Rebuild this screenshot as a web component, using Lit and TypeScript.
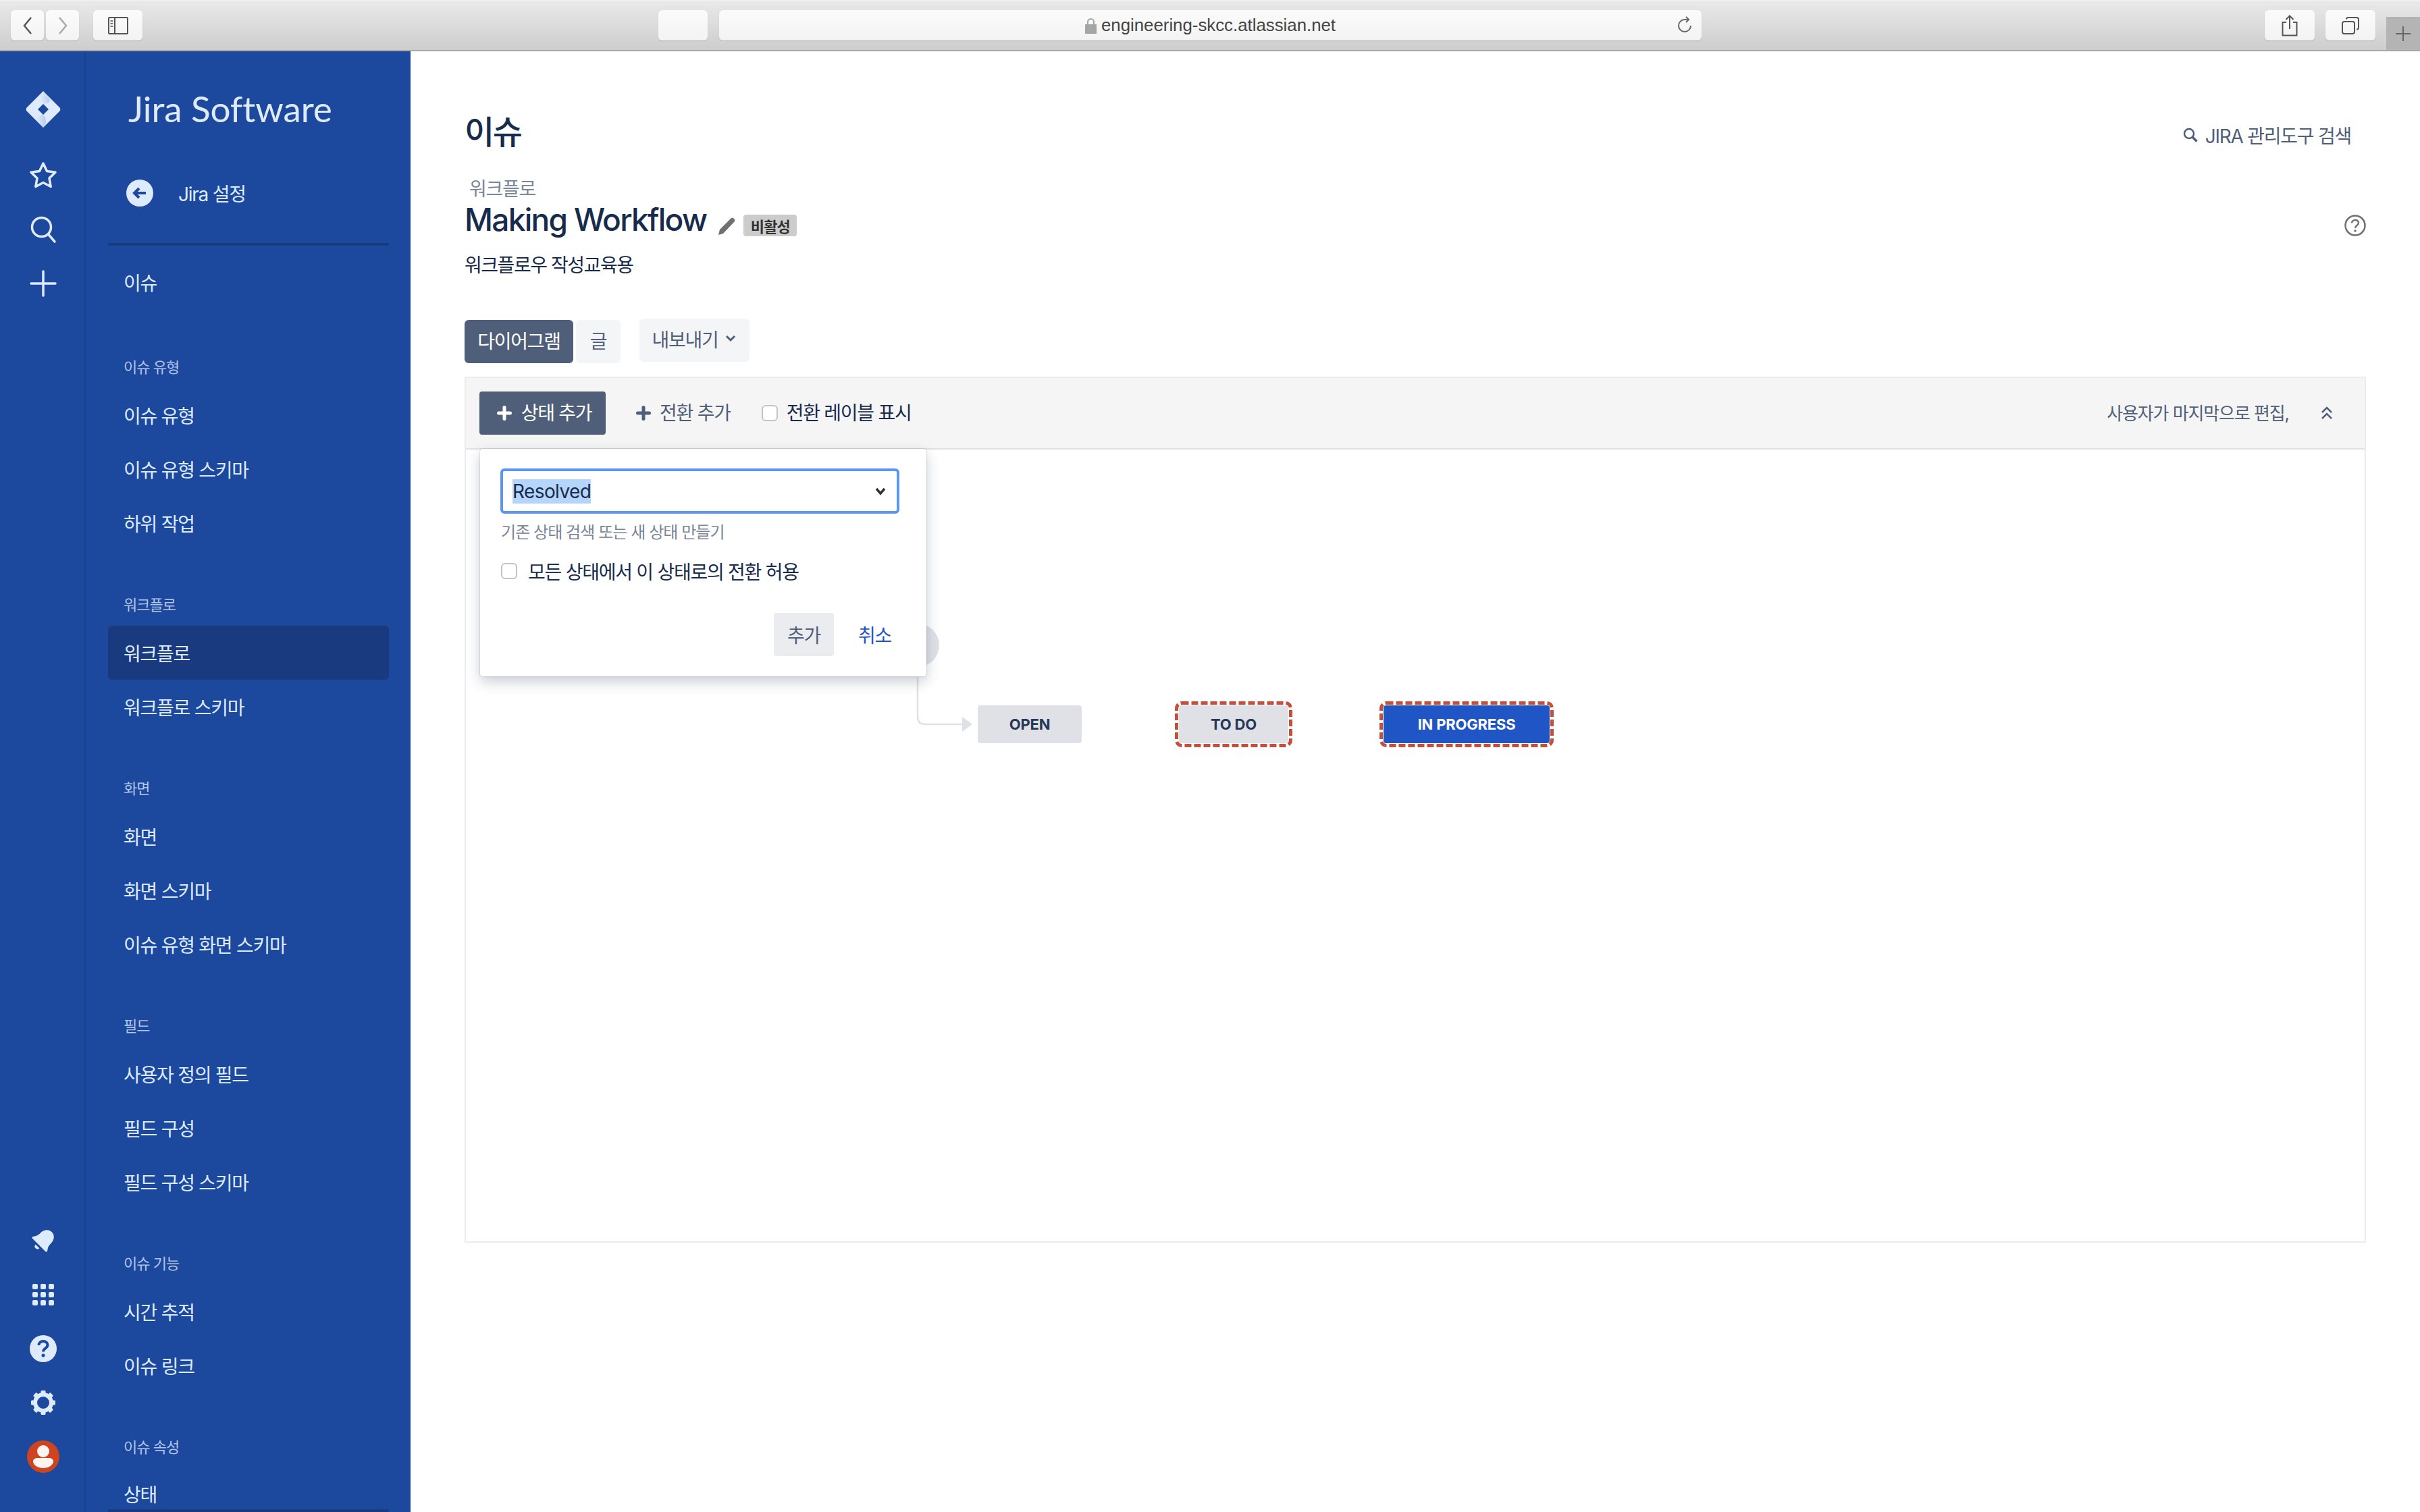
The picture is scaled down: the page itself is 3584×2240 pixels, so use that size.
import { LitElement, html, css, svg } from "lit";
import { customElement } from "lit/decorators.js";

const sections: { heading?: string; items: string[] }[] = [
  { heading: "이슈 유형", items: ["이슈 유형", "이슈 유형 스키마", "하위 작업"] },
  { heading: "워크플로", items: ["워크플로", "워크플로 스키마"] },
  { heading: "화면", items: ["화면", "화면 스키마", "이슈 유형 화면 스키마"] },
  { heading: "필드", items: ["사용자 정의 필드", "필드 구성", "필드 구성 스키마"] },
  { heading: "이슈 기능", items: ["시간 추적", "이슈 링크"] },
  { heading: "이슈 속성", items: ["상태"] },
];

const ICON = "#deebff";

@customElement("app-root")
export class AppRoot extends LitElement {
  static styles = css`
    :host {
      display: flex;
      flex-direction: column;
      width: 3584px;
      height: 2240px;
      overflow: hidden;
      background: #fff;
      font-family: Inter, "Noto Sans CJK KR", sans-serif;
      font-size: 28px;
      letter-spacing: -1.25px;
      color: #172b4d;
    }
    * { box-sizing: border-box; }
    svg { display: block; }

    /* Browser chrome */
    .chrome {
      position: relative;
      flex: none;
      height: 76px;
      display: flex;
      align-items: flex-start;
      padding: 13px 16px 0;
      background: linear-gradient(#e9e9e9, #cdcdcd);
      border-bottom: 2px solid #a9a9a9;
      border-top: 2px solid #efefef;
    }
    .cb {
      flex: none;
      height: 45px;
      border-radius: 6px;
      background: linear-gradient(#fbfbfb, #f3f3f3);
      box-shadow: 0 1px 1px #a9a9a9;
      display: flex;
      align-items: center;
      justify-content: center;
    }
    .cb.nav { width: 49px; margin-right: 3px; }
    .cb.side { width: 73px; margin-left: 18px; }
    .cb.blank { width: 73px; margin-left: 764px; }
    .cb.url {
      width: 1455px;
      margin-left: 17px;
      position: relative;
      gap: 7px;
      font-family: "Liberation Sans", sans-serif;
      font-size: 25.8px;
      letter-spacing: 0;
      color: #444;
    }
    .cb.url .reload { position: absolute; right: 12px; top: 9px; }
    .cb.share { width: 74px; margin-left: 834px; }
    .cb.tabs { width: 74px; margin-left: 16px; }
    .newtab {
      flex: none;
      width: 50px;
      height: 49px;
      margin: 10px -16px 0 16px;
      background: #b4b4b4;
      display: flex;
      align-items: center;
      justify-content: center;
    }

    .body { flex: 1; display: flex; min-height: 0; }

    /* Rail */
    .rail {
      flex: none;
      width: 127px;
      background: #1c489e;
      border-right: 2px solid #1a4290;
      display: flex;
      flex-direction: column;
      align-items: center;
      padding: 59px 0 58px 2px;
    }
    .rail .logo { margin-bottom: 49px; }
    .rail .top { display: flex; flex-direction: column; align-items: center; gap: 36px; }
    .rail .bottom { margin-top: auto; display: flex; flex-direction: column; align-items: center; gap: 36px; }
    .rail .avatar { margin-top: -2px; }

    /* Sidebar */
    .side-nav {
      flex: none;
      width: 481px;
      background: #1c489e;
      color: #deebff;
      padding: 0 32px 0 33px;
      overflow: hidden;
    }
    .brand {
      font-family: Lato, sans-serif;
      font-weight: 400;
      font-size: 53px;
      letter-spacing: -0.1px;
      line-height: 60px;
      padding: 55px 0 0 30px;
      height: 117px;
      color: #deebff;
    }
    .back {
      height: 80px;
      margin-top: 53px;
      display: flex;
      align-items: center;
      padding-left: 27px;
      gap: 37px;
      color: #deebff;
    }
    .rule { height: 4px; border-radius: 2px; background: #1a3a7f; }
    .rule.upper { margin-top: 34px; }
    .item {
      height: 80px;
      display: flex;
      align-items: center;
      padding-left: 23px;
      border-radius: 6px;
      white-space: nowrap;
    }
    .item.first { margin-top: 14px; }
    .item.sel { background: #1a3a7f; }
    .item.last { height: 61px; align-items: flex-start; padding-top: 23px; line-height: 34px; }
    .heading {
      height: 66px;
      margin-top: 46px;
      display: flex;
      align-items: center;
      padding-left: 23px;
      font-size: 22px;
      letter-spacing: -1px;
      color: #b3c5e8;
    }
    .heading.first { margin-top: 51px; }

    /* Main */
    .main { position: relative; flex: 1; min-width: 0; padding: 0 80px 0 80px; }
    .top-row { display: flex; justify-content: space-between; align-items: center; height: 166px; padding-top: 74px; }
    h1 { margin: 0; font-size: 48px; line-height: 56px; font-weight: 500; letter-spacing: -2.4px; color: #172b4d; }
    .admin { display: flex; align-items: center; gap: 11px; color: #505f79; padding-right: 22px; margin-top: 8px; }
    .crumb { color: #7a869a; padding-left: 7px; line-height: 34px; margin-top: 21px; }
    .title-row { display: flex; align-items: center; height: 56px; position: relative; }
    .title { font-size: 46px; font-weight: 500; line-height: 56px; letter-spacing: -1.7px; color: #172b4d; }
    .pencil { margin-left: 17px; margin-top: 20px; }
    .badge {
      margin-left: 12px;
      margin-top: 18px;
      height: 32px;
      width: 79px;
      border-radius: 4px;
      background: #ccc;
      color: #333;
      font-size: 22px;
      font-weight: 700;
      letter-spacing: -0.8px;
      display: flex;
      align-items: center;
      justify-content: center;
    }
    .help { margin-left: auto; margin-right: 0; margin-top: 18px; }
    .desc { margin-top: 23px; line-height: 34px; letter-spacing: -1.45px; }

    .tabs-row { display: flex; align-items: flex-start; margin-top: 64px; height: 64px; }
    .tab {
      height: 64px;
      display: flex;
      align-items: center;
      justify-content: center;
      border-radius: 6px;
      background: #f4f5f7;
      color: #505f79;
      padding-bottom: 5px;
    }
    .tab.on { width: 161px; background: #505f79; color: #fff; }
    .tab.text { width: 66px; margin-left: 4px; }
    .tab.export { width: 163px; margin-left: 28px; margin-top: -2px; gap: 10px; padding-right: 2px; }

    .panel {
      margin-top: 20px;
      height: 1283px;
      border: 2px solid #ebecf0;
      position: relative;
    }
    .toolbar {
      height: 106px;
      background: #f5f5f6;
      border-bottom: 2px solid #dfe1e6;
      display: flex;
      align-items: center;
      padding: 0 20px;
    }
    .toolbar span:not(.cbx) { margin-bottom: 4px; }
    .btn-add {
      width: 187px;
      height: 64px;
      border-radius: 4px;
      background: #505f79;
      color: #fff;
      display: flex;
      align-items: center;
      justify-content: center;
      gap: 14px;
      padding-left: 5px;
    }
    .btn-trans { display: flex; align-items: center; gap: 13px; margin-left: 45px; color: #505f79; }
    .cbx {
      flex: none;
      width: 24px;
      height: 24px;
      border-radius: 6px;
      background: #fff;
      border: 2px solid #c4c4c4;
    }
    .toggle { display: flex; align-items: center; gap: 13px; margin-left: 46px; color: #172b4d; }
    .edited { margin-left: auto; color: #505f79; font-size: 26px; letter-spacing: -1.1px; }
    .collapse { margin-left: 46px; margin-right: 26px; }

    /* Diagram */
    .start {
      position: absolute;
      left: 637px;
      top: 364px;
      width: 64px;
      height: 64px;
      border-radius: 50%;
      background: #dfe1e6;
    }
    .connector { position: absolute; left: 650px; top: 443px; }
    .node {
      position: absolute;
      top: 485px;
      height: 56px;
      border-radius: 4px;
      background: #dfe1e6;
      color: #253858;
      font-size: 22px;
      font-weight: 700;
      letter-spacing: -0.2px;
      display: flex;
      align-items: center;
      justify-content: center;
    }
    .node svg { position: absolute; left: -8px; top: -8px; }
    .node.open { left: 758px; width: 154px; }
    .node.todo { left: 1056px; width: 162px; }
    .node.prog { left: 1359px; width: 246px; background: #1f55c4; color: #fff; }

    /* Popup */
    .popup {
      position: absolute;
      left: 21px;
      top: 105px;
      width: 661px;
      height: 337px;
      background: #fff;
      border-radius: 4px;
      box-shadow: 0 8px 20px rgba(9, 30, 66, 0.22), 0 0 2px rgba(9, 30, 66, 0.3);
      padding: 29px 30px 0;
    }
    .select {
      width: 591px;
      height: 67px;
      border: 4px solid #5b96f5;
      border-radius: 6px;
      display: flex;
      align-items: center;
      justify-content: space-between;
      padding: 0 16px 0 14px;
    }
    .select .val { background: #b5d5fb; line-height: 36px; letter-spacing: -0.6px; color: #172b4d; }
    .hint { font-size: 24px; letter-spacing: -0.95px; color: #7a869a; margin-top: 14px; line-height: 28px; padding-left: 1px; }
    .allow { display: flex; align-items: center; gap: 16px; margin-top: 26px; padding-left: 1px; height: 34px; }
    .actions { display: flex; justify-content: flex-end; align-items: center; margin-top: 45px; width: 591px; padding-right: 12px; gap: 36px; }
    .ok {
      width: 89px;
      height: 64px;
      border-radius: 4px;
      background: #ebecf0;
      color: #505f79;
      display: flex;
      align-items: center;
      justify-content: center;
    }
    .cancel { color: #1f55c4; }
  `;

  private railIcon(content: unknown, w = 44, h = 44, vb = "0 0 44 44", cls = "") {
    return html`<svg class=${cls} width=${w} height=${h} viewBox=${vb}>${content}</svg>`;
  }

  private dash(w: number, h: number) {
    return html`<svg width=${w + 16} height=${h + 16} viewBox="0 0 ${w + 16} ${h + 16}"><rect x="4.500" y="4.500" width=${w + 7} height=${h + 7} rx="8" fill="none" stroke="#c54f3d" stroke-width="5" stroke-dasharray="10 4"/></svg>`;
  }

  render() {
    return html`
      <div class="chrome">
        <div class="cb nav"><svg width="16" height="28" viewBox="0 0 16 28"><path d="M13 2 3 14l10 12" fill="none" stroke="#555" stroke-width="2.500"/></svg></div>
        <div class="cb nav"><svg width="16" height="28" viewBox="0 0 16 28"><path d="M3 2l10 12L3 26" fill="none" stroke="#aaa" stroke-width="2.500"/></svg></div>
        <div class="cb side"><svg width="30" height="26" viewBox="0 0 30 26"><rect x="1" y="1" width="28" height="24" rx="1" fill="none" stroke="#555" stroke-width="2"/><path d="M10 1v24" stroke="#555" stroke-width="2"/><path d="M3.500 6h4M3.500 10h4M3.500 14h4" stroke="#777" stroke-width="2"/></svg></div>
        <div class="cb blank"></div>
        <div class="cb url">
          <svg width="17" height="24" viewBox="0 0 17 24"><path d="M4 11V6.500a4.500 4.500 0 0 1 9 0V11" fill="none" stroke="#a5a5a5" stroke-width="2"/><rect y="10" width="17" height="14" fill="#a5a5a5"/></svg>
          <span>engineering-skcc.atlassian.net</span>
          <svg class="reload" width="26" height="26" viewBox="0 0 26 26"><path d="M22 14a9 9 0 1 1-9-9h5" fill="none" stroke="#666" stroke-width="2"/><path d="M15 1l4 4-4 4" fill="none" stroke="#666" stroke-width="2"/></svg>
        </div>
        <div class="cb share"><svg width="24" height="32" viewBox="0 0 24 32"><path d="M7 11H1.500v19.500h21V11H17M12 21V2M6.500 7 12 1.500 17.500 7" fill="none" stroke="#555" stroke-width="2"/></svg></div>
        <div class="cb tabs"><svg width="26" height="26" viewBox="0 0 26 26"><rect x="1" y="7" width="18" height="18" rx="3" fill="none" stroke="#555" stroke-width="2"/><path d="M7 3.500Q7 1 9.500 1H22q3 0 3 3v12q0 2.500-3 2.500" fill="none" stroke="#555" stroke-width="2"/></svg></div>
        <div class="newtab"><svg width="24" height="24" viewBox="0 0 24 24"><path d="M12 1v22M1 12h22" stroke="#666" stroke-width="2"/></svg></div>
      </div>

      <div class="body">
        <div class="rail">
          <div class="logo">
            <svg width="52" height="54" viewBox="0 0 52 54">
              <defs><linearGradient id="lg" x1="0" y1="0" x2="1" y2="0"><stop offset="0" stop-color="#deebff"/><stop offset="1" stop-color="#a9bfe8"/></linearGradient></defs>
              <path fill-rule="evenodd" fill=${ICON} d="M26 0 50 24a4 4 0 0 1 0 6L26 54 2 30a4 4 0 0 1 0-6ZM26 19l-8 8 8 8 8-8Z"/>
              <path fill="url(#lg)" d="M26 19c-5-5-6-12 0-19l8 10c3 3 2 5 0 7Z" opacity=".7"/>
              <path fill="url(#lg)" d="M26 35c5 5 6 12 0 19l-8-10c-3-3-2-5 0-7Z" opacity=".7"/>
            </svg>
          </div>
          <div class="top">
            ${this.railIcon(svg`<path d="M22 4l5.500 11.500 12.500 1.700-9 8.800 2.200 12.500L22 32.500 10.800 38.500 13 26l-9-8.800 12.500-1.700Z" fill="none" stroke=${ICON} stroke-width="3.500" stroke-linejoin="round"/>`)}
            ${this.railIcon(svg`<circle cx="19.500" cy="18.500" r="14" fill="none" stroke=${ICON} stroke-width="3.500"/><path d="M29.500 29 39 40" stroke=${ICON} stroke-width="3.500" stroke-linecap="round"/>`)}
            ${this.railIcon(svg`<path d="M22 4v36M4 22h36" stroke=${ICON} stroke-width="3.500" stroke-linecap="round"/>`)}
          </div>
          <div class="bottom">
            ${this.railIcon(svg`<g transform="rotate(45 22 22)"><path fill=${ICON} d="M22 4c-7 0-11 6-11 13 0 6-2 9-4 11v3h30v-3c-2-2-4-5-4-11 0-7-4-13-11-13Z"/><path fill=${ICON} d="M18 34h8a4 4 0 0 1-8 0Z"/></g>`)}
            ${this.railIcon(svg`${[6, 18, 30].flatMap((y) => [6, 18, 30].map((x) => svg`<rect x=${x} y=${y} width="8" height="8" rx="2" fill=${ICON}/>`))}`)}
            ${this.railIcon(svg`<circle cx="22" cy="22" r="20" fill=${ICON}/><path d="M15.500 17c0-8 13-8 13-.5 0 5-6.500 5-6.500 10" fill="none" stroke="#1c489e" stroke-width="4"/><circle cx="22" cy="32" r="2.500" fill="#1c489e"/>`)}
            ${this.railIcon(svg`<circle cx="22" cy="22" r="12" fill="none" stroke=${ICON} stroke-width="6"/><g fill=${ICON}>${[0, 45, 90, 135, 180, 225, 270, 315].map((a) => svg`<rect x="18.500" y="4" width="7" height="7" rx="1.500" transform="rotate(${a} 22 22)"/>`)}</g>`)}
            ${this.railIcon(svg`<circle cx="24" cy="24" r="24" fill="#cf4420"/><circle cx="24" cy="16" r="9" fill="#fff4f0"/><path d="M9 31c0-4 4-5 7-5h16c3 0 7 1 7 5 0 6-8 10-15 10S9 37 9 31Z" fill="#fff4f0"/>`, 48, 48, "0 0 48 48", "avatar")}
          </div>
        </div>

        <nav class="side-nav">
          <div class="brand">Jira Software</div>
          <div class="back">
            <svg width="40" height="40" viewBox="0 0 40 40"><circle cx="20" cy="20" r="20" fill=${ICON}/><path d="M29 20H13M19 13l-7 7 7 7" fill="none" stroke="#1c489e" stroke-width="4"/></svg>
            <span>Jira 설정</span>
          </div>
          <div class="rule upper"></div>
          <div class="item first">이슈</div>
          ${sections.map(
            (s, i) => html`
              <div class="heading ${i === 0 ? "first" : ""}">${s.heading}</div>
              ${s.items.map(
                (t) =>
                  html`<div class="item ${t === "워크플로" ? "sel" : ""} ${t === "상태" ? "last" : ""}">${t}</div>`
              )}
            `
          )}
          <div class="rule"></div>
        </nav>

        <main class="main">
          <div class="top-row">
            <h1>이슈</h1>
            <div class="admin">
              <svg width="22" height="22" viewBox="0 0 22 22"><circle cx="9" cy="9" r="7" fill="none" stroke="#505f79" stroke-width="2.500"/><path d="M14 14l6.500 6.500" stroke="#505f79" stroke-width="3.500"/></svg>
              <span>JIRA 관리도구 검색</span>
            </div>
          </div>
          <div class="crumb">워크플로</div>
          <div class="title-row">
            <span class="title">Making Workflow</span>
            <svg class="pencil" width="26" height="26" viewBox="0 0 26 26"><path d="M20 1c3-1 6 2 5 5L8 24l-7 2 2-8Z" fill="#707070"/></svg>
            <span class="badge">비활성</span>
            <svg class="help" width="32" height="32" viewBox="0 0 32 32"><circle cx="16" cy="16" r="14.500" fill="none" stroke="#707070" stroke-width="2.500"/><path d="M11 12.500c0-6 10-6 10-.5 0 4-5 4-5 8" fill="none" stroke="#707070" stroke-width="2.500"/><circle cx="16" cy="24" r="1.800" fill="#707070"/></svg>
          </div>
          <div class="desc">워크플로우 작성교육용</div>

          <div class="tabs-row">
            <div class="tab on">다이어그램</div>
            <div class="tab text">글</div>
            <div class="tab export">
              <span>내보내기</span>
              <svg width="16" height="11" viewBox="0 0 16 11"><path d="M2 2l6 6 6-6" fill="none" stroke="#505f79" stroke-width="3"/></svg>
            </div>
          </div>

          <div class="panel">
            <div class="toolbar">
              <div class="btn-add">
                <svg width="22" height="22" viewBox="0 0 22 22"><path d="M11 2.500v17M2.500 11h17" stroke="#fff" stroke-width="5" stroke-linecap="round"/></svg>
                <span>상태 추가</span>
              </div>
              <div class="btn-trans">
                <svg width="22" height="22" viewBox="0 0 22 22"><path d="M11 2.500v17M2.500 11h17" stroke="#505f79" stroke-width="5" stroke-linecap="round"/></svg>
                <span>전환 추가</span>
              </div>
              <label class="toggle"><span class="cbx"></span><span>전환 레이블 표시</span></label>
              <span class="edited">사용자가 마지막으로 편집,</span>
              <svg class="collapse" width="20" height="22" viewBox="0 0 20 22"><path d="M3 10l7-7 7 7M3 19l7-7 7 7" fill="none" stroke="#505f79" stroke-width="2.500"/></svg>
            </div>

            <div class="start"></div>
            <svg class="connector" width="100" height="82" viewBox="0 0 100 82">
              <path d="M19 0v58q0 12 11 12h56" fill="none" stroke="#dfe1e6" stroke-width="2.500"/>
              <path d="M85 59l15 11-15 11Z" fill="#dfe1e6"/>
            </svg>
            <div class="node open">OPEN</div>
            <div class="node todo">${this.dash(162, 56)}TO DO</div>
            <div class="node prog">${this.dash(246, 56)}IN PROGRESS</div>

            <div class="popup">
              <div class="select">
                <span class="val">Resolved</span>
                <svg width="16" height="12" viewBox="0 0 16 12"><path d="M2 2l6 7 6-7" fill="none" stroke="#333" stroke-width="3.500"/></svg>
              </div>
              <div class="hint">기존 상태 검색 또는 새 상태 만들기</div>
              <label class="allow"><span class="cbx"></span><span>모든 상태에서 이 상태로의 전환 허용</span></label>
              <div class="actions">
                <div class="ok">추가</div>
                <div class="cancel">취소</div>
              </div>
            </div>
          </div>
        </main>
      </div>
    `;
  }
}
